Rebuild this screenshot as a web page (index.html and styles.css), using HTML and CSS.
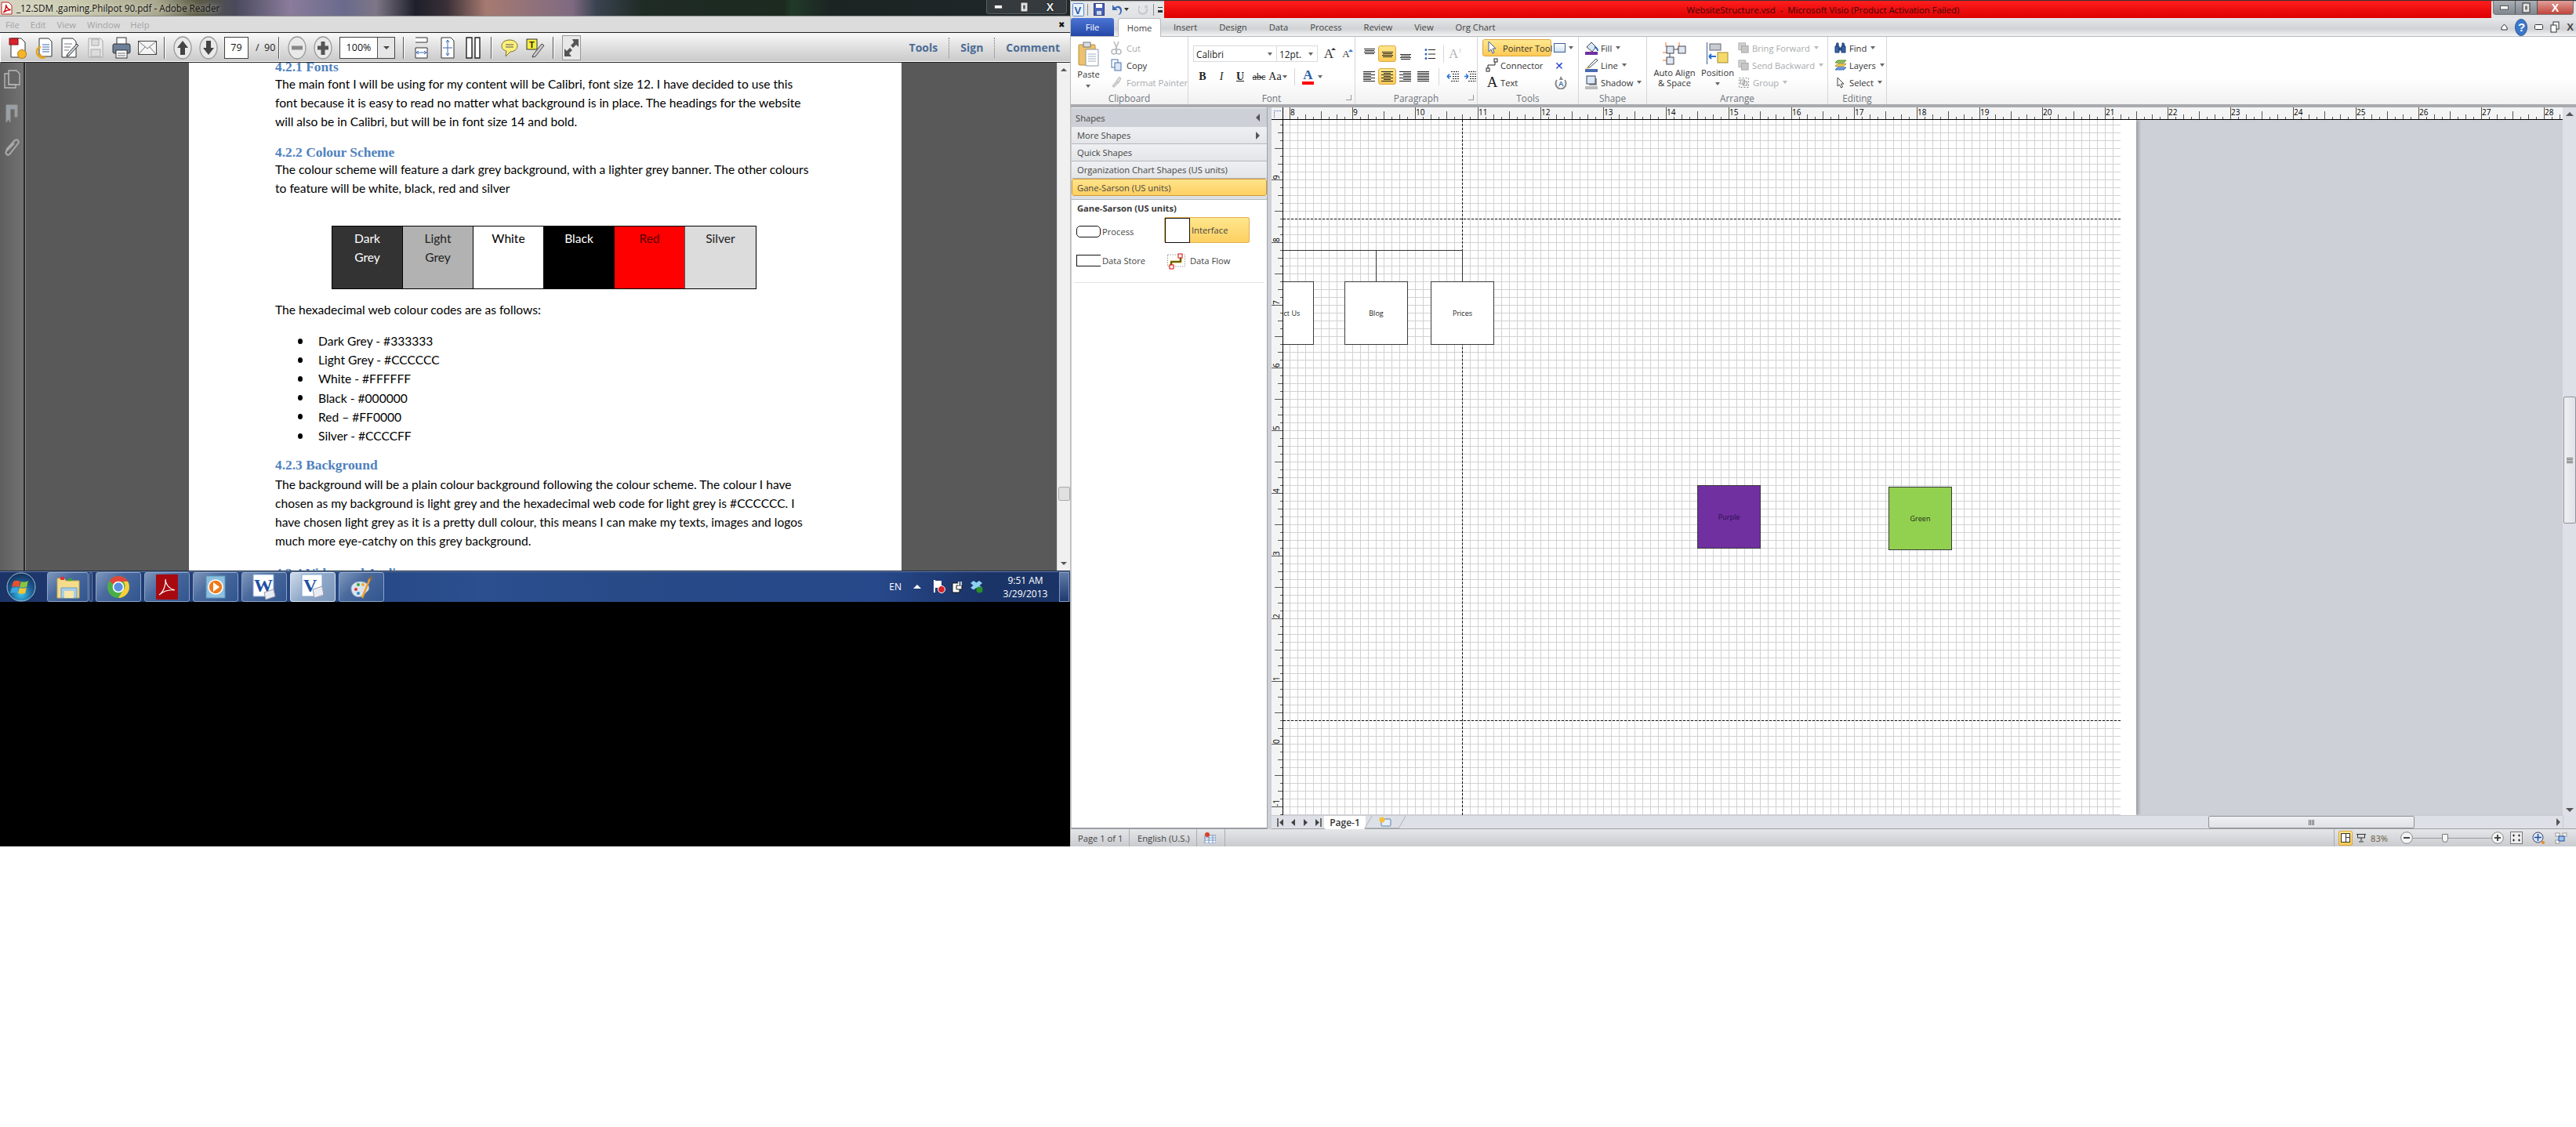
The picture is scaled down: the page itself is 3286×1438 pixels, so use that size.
FILE: index.html
```html
<!DOCTYPE html>
<html lang="en">
<head>
<meta charset="utf-8">
<title>Reader and Visio</title>
<link rel="stylesheet" href="styles.css">
</head>
<body>
<svg class="defs" width="0" height="0">
  <symbol id="al-mid" viewBox="0 0 14 14"><path d="M0 4.500h14M1 6.500h12M0 8.500h14M1 10.500h12" stroke="#222" fill="none"/></symbol>
  <symbol id="al-top" viewBox="0 0 14 14"><path d="M0 .5h14M1 2.500h12M0 4.500h14M1 6.500h12" stroke="#222" fill="none"/></symbol>
  <symbol id="al-bot" viewBox="0 0 14 14"><path d="M0 7.500h14M1 9.500h12M0 11.500h14M1 13.500h12" stroke="#222" fill="none"/></symbol>
  <symbol id="j-left" viewBox="0 0 15 15"><path d="M0 1.500h15M0 3.500h10M0 5.500h15M0 7.500h10M0 9.500h15M0 11.500h10M0 13.500h15" stroke="#222" fill="none"/></symbol>
  <symbol id="j-center" viewBox="0 0 15 15"><path d="M0 1.500h15M3 3.500h9M0 5.500h15M3 7.500h9M0 9.500h15M3 11.500h9M0 13.500h15" stroke="#222" fill="none"/></symbol>
  <symbol id="j-right" viewBox="0 0 15 15"><path d="M0 1.500h15M5 3.500h10M0 5.500h15M5 7.500h10M0 9.500h15M5 11.500h10M0 13.500h15" stroke="#222" fill="none"/></symbol>
  <symbol id="j-full" viewBox="0 0 15 15"><path d="M0 1.500h15M0 3.500h15M0 5.500h15M0 7.500h15M0 9.500h15M0 11.500h15M0 13.500h15" stroke="#222" fill="none"/></symbol>
  <symbol id="front" viewBox="0 0 16 16"><rect x="1" y="1" width="10" height="10" fill="#d3d3d3" stroke="#aaa"/><rect x="5" y="5" width="10" height="10" fill="#c6c6c6" stroke="#a5a5a5"/></symbol>
</svg>

<div class="left-screen">
  <section class="reader">
    <header class="r-title">
      <svg width="15" height="17" viewBox="0 0 15 17" class="r-appicon"><path d="M1 1h9l4 4v11H1z" fill="#fff" stroke="#b22"/><path d="M3 14c3-2 4-7 3.500-10 1 4 3 6 6 6.500-4 0-6 1-9.500 3.500z" fill="none" stroke="#c00" stroke-width="1.300"/></svg>
      <span class="r-title-text">_12.SDM .gaming.Philpot 90.pdf - Adobe Reader</span>
      <div class="glass-btns">
        <svg width="12" height="6" viewBox="0 0 12 6"><rect x=".5" y=".5" width="10" height="4.500" fill="#fff" stroke="#444"/></svg>
        <svg width="12" height="14" viewBox="0 0 12 14"><rect x="1" y="1" width="9" height="12" fill="#ddd" stroke="#333"/><rect x="3.500" y="4" width="4" height="6" fill="#666" stroke="#eee"/></svg>
        <span class="x-btn">X</span>
      </div>
    </header>
    <nav class="r-menu">
      <span class="m1">File</span><span class="m2">Edit</span><span class="m3">View</span><span class="m4">Window</span><span class="m5">Help</span>
      <span class="m-close">✖</span>
    </nav>
    <div class="r-toolbar">
      <span class="tb first"><svg width="24" height="30" viewBox="0 0 24 30"><path d="M3 3h13l5 5v19H3z" fill="#fff" stroke="#333"/><rect x="1" y="3" width="11" height="8" fill="#d9242c" stroke="#7a1014"/><circle cx="17" cy="23" r="5.500" fill="#f5b52b" stroke="#b57c10"/></svg></span>
      <span class="tb"><svg width="24" height="30" viewBox="0 0 24 30"><path d="M6 3h12l4 4v19H6z" fill="#fff" stroke="#333"/><path d="M10 11h9M10 14h9M10 17h9M10 20h9" stroke="#3a6bb5"/><path d="M8 14C2 15 0 24 9 28M9 28l-2-5M9 28l5-1" stroke="#e6a51d" stroke-width="2.500" fill="none"/></svg></span>
      <span class="tb"><svg width="24" height="30" viewBox="0 0 24 30"><path d="M2 3h14l4 4v20H2z" fill="#fff" stroke="#333"/><path d="M5 10h10M5 14h8M5 18h6" stroke="#777"/><path d="M9 23l12-13 2 2-12 13-3 1z" fill="#cdd7e2" stroke="#333"/></svg></span>
      <span class="tb"><svg width="22" height="28" viewBox="0 0 22 28"><path d="M2 2h15l3 3v21H2z" fill="#ececec" stroke="#a8a8a8"/><rect x="6" y="3" width="9" height="8" fill="#ddd" stroke="#aaa"/><rect x="5" y="16" width="12" height="9" fill="#dcdcdc" stroke="#aaa"/></svg></span>
      <span class="tb"><svg width="24" height="30" viewBox="0 0 24 30"><rect x="6" y="2" width="12" height="10" fill="#fff" stroke="#333"/><rect x="1" y="10" width="22" height="12" rx="2" fill="#6e7f98" stroke="#333"/><rect x="5" y="18" width="14" height="10" fill="#fff" stroke="#333"/><path d="M7 22h10M7 25h10" stroke="#666"/></svg></span>
      <span class="tb"><svg width="24" height="18" viewBox="0 0 24 18"><rect x=".5" y=".5" width="23" height="17" fill="#f4f4f4" stroke="#444"/><path d="M1 1l11 9 11-9M1 17l8-9M23 17l-8-9" stroke="#777" fill="none"/></svg></span>
      <i class="tsep s1"></i>
      <span class="tb t-up"><svg width="24" height="30" viewBox="0 0 24 30"><ellipse cx="12" cy="15" rx="11" ry="14" fill="#e9e9e9" stroke="#999" stroke-width="1.300"/><path d="M12 6l7 9h-4v9H9v-9H5z" fill="#444"/></svg></span>
      <span class="tb"><svg width="24" height="30" viewBox="0 0 24 30"><ellipse cx="12" cy="15" rx="11" ry="14" fill="#e9e9e9" stroke="#999" stroke-width="1.300"/><path d="M12 24l7-9h-4V6H9v9H5z" fill="#444"/></svg></span>
      <span class="pageno">79</span><span class="pagetot">/ &nbsp;90</span>
      <i class="tsep s2"></i>
      <span class="tb t-minus"><svg width="24" height="30" viewBox="0 0 24 30"><ellipse cx="12" cy="15" rx="11" ry="14" fill="#e9e9e9" stroke="#999" stroke-width="1.300"/><rect x="5" y="12.500" width="14" height="5" fill="#888"/></svg></span>
      <span class="tb"><svg width="24" height="30" viewBox="0 0 24 30"><ellipse cx="12" cy="15" rx="11" ry="14" fill="#e9e9e9" stroke="#999" stroke-width="1.300"/><path d="M5 12.500h4.500V7h5v5.500H19v5h-4.500V24h-5v-6.500H5z" fill="#555"/></svg></span>
      <span class="zoom-combo"><span class="zoom-val">100%</span><span class="zoom-arrow"></span></span>
      <i class="tsep s3"></i>
      <span class="tb t-fit"><svg width="18" height="28" viewBox="0 0 18 28"><path d="M1 1h15v6H1M1 14h15v13H1z" fill="#fff" stroke="#333"/><path d="M2 20h13M2 20l3-2M2 20l3 2M15 20l-3-2M15 20l-3 2" stroke="#3a6bb5" fill="none"/></svg></span>
      <span class="tb"><svg width="18" height="28" viewBox="0 0 18 28"><path d="M1 1h12l4 4v22H1z" fill="#fff" stroke="#333"/><path d="M9 4v20M3 14h12M9 4l-2 3M9 4l2 3M9 24l-2-3M9 24l2-3" stroke="#3a6bb5" fill="none"/></svg></span>
      <span class="tb"><svg width="20" height="28" viewBox="0 0 20 28"><path d="M1 1h7v26H1zM12 1h6v26h-6z" fill="#fff" stroke="#222" stroke-width="1.400"/></svg></span>
      <i class="tsep s4"></i>
      <span class="tb t-note"><svg width="22" height="24" viewBox="0 0 22 24"><path d="M11 2c5.500 0 10 3 10 7.500S16.500 17 12 17l-6 6 1-7C3 15 1 13 1 9.500 1 5 5.500 2 11 2z" fill="#fcf07a" stroke="#7a6f2a"/><path d="M6 8h10M6 11h10" stroke="#555"/></svg></span>
      <span class="tb"><svg width="24" height="26" viewBox="0 0 24 26"><rect x="1" y="2" width="13" height="13" fill="#f7ee3c" stroke="#333"/><text x="4" y="13" class="svg-t">T</text><path d="M9 22l11-14 3 2-11 14-4 1z" fill="#c9c9c9" stroke="#444"/></svg></span>
      <i class="tsep s5"></i>
      <span class="expand"><svg width="22" height="28" viewBox="0 0 22 28"><path d="M12 3h8v10l-3-3-4 4-3-3 4-4zM2 25V15l3 3 4-4 3 3-4 4 3 4z" fill="#555"/></svg></span>
      <span class="t-tools">Tools</span><i class="dots"></i><span class="t-sign">Sign</span><i class="dots"></i><span class="t-comment">Comment</span>
    </div>
    <div class="r-body">
      <aside class="r-nav">
        <svg width="22" height="24" viewBox="0 0 22 24"><path d="M7 1h10l4 4v14H7z" fill="#666" stroke="#bbb" stroke-width="1.300"/><path d="M2 5h5v14h9v4H2z" fill="#666" stroke="#bbb" stroke-width="1.300"/></svg>
        <svg width="18" height="24" viewBox="0 0 18 24"><path d="M2 1h14v15l-3 0V6H7v17l-2-4-3 4z" fill="#9aa0a8" stroke="#999"/></svg>
        <svg width="22" height="24" viewBox="0 0 22 24"><path d="M4 14L15 2c3-2 6 1 4 4L8 20c-2 2-6-1-4-4L14 6" fill="none" stroke="#aaa" stroke-width="2"/></svg>
      </aside>
      <div class="r-view">
        <article class="page">
          <h3 class="h-a">4.2.1 Fonts</h3>
          <p>The main font I will be using for my content will be Calibri, font size 12. I have decided to use this<br>font because it is easy to read no matter what background is in place. The headings for the website<br>will also be in Calibri, but will be in font size 14 and bold.</p>
          <h3 class="h-b">4.2.2 Colour Scheme</h3>
          <p class="p-b">The colour scheme will feature a dark grey background, with a lighter grey banner. The other colours<br>to feature will be white, black, red and silver</p>
          <div class="swatches">
            <div class="sw sw-dark">Dark<br>Grey</div>
            <div class="sw sw-light">Light<br>Grey</div>
            <div class="sw sw-white">White</div>
            <div class="sw sw-black">Black</div>
            <div class="sw sw-red">Red</div>
            <div class="sw sw-silver">Silver</div>
          </div>
          <p class="p-c">The hexadecimal web colour codes are as follows:</p>
          <ul class="codes">
            <li>Dark Grey - #333333</li>
            <li>Light Grey - #CCCCCC</li>
            <li>White - #FFFFFF</li>
            <li>Black - #000000</li>
            <li>Red – #FF0000</li>
            <li>Silver - #CCCCFF</li>
          </ul>
          <h3 class="h-c">4.2.3 Background</h3>
          <p class="p-d">The background will be a plain colour background following the colour scheme. The colour I have<br>chosen as my background is light grey and the hexadecimal web code for light grey is #CCCCCC. I<br>have chosen light grey as it is a pretty dull colour, this means I can make my texts, images and logos<br>much more eye-catchy on this grey background.</p>
          <h3 class="h-d">4.2.4 Video and Audio</h3>
        </article>
      </div>
      <div class="r-scroll">
        <i class="arr-up"></i>
        <i class="r-thumb"></i>
        <i class="arr-down"></i>
      </div>
    </div>
    <footer class="taskbar">
      <span class="orb"><svg width="38" height="38" viewBox="0 0 38 38"><defs><radialGradient id="orbg" cx=".5" cy=".75" r=".7"><stop offset="0" stop-color="#39c6ee"/><stop offset=".55" stop-color="#1f5f95"/><stop offset="1" stop-color="#16345e"/></radialGradient></defs><circle cx="19" cy="19" r="18" fill="url(#orbg)" stroke="#9fc3d8"/><path d="M9 12c3-2 6-1 9 0l-2 7c-3-1-6-1-9 0z" fill="#e8512f"/><path d="M19 12c3 1 6 1 9-1l-2 8c-3 1-6 1-9 0z" fill="#8cc63e"/><path d="M7 20c3-1 6-1 9 0l-2 7c-3-1-6-1-9 0z" fill="#3aa6e0"/><path d="M17 20c3 1 6 1 9 0l-2 7c-3 1-6 1-9 0z" fill="#f7c531"/></svg></span>
      <span class="tbtn t-explorer"><svg width="34" height="34" viewBox="0 0 34 34"><path d="M3 6h9l2 3h17v22H3z" fill="#f5dc8a" stroke="#c7a850"/><rect x="7" y="4" width="5" height="4" fill="#d33"/><rect x="17" y="6" width="5" height="3" fill="#3a3"/><path d="M8 18h20v13H8z" fill="#a9cde6" stroke="#6d9dc4"/><path d="M12 22h12v9H12z" fill="#f8e7a8"/></svg></span><i class="tb-grip"></i>
      <span class="tbtn t-chrome"><svg width="30" height="30" viewBox="0 0 30 30"><circle cx="15" cy="15" r="14" fill="#4aae48"/><path d="M15 1a14 14 0 0 1 12.100 7H15a7 7 0 0 0-6.300 4L3.500 7A14 14 0 0 1 15 1z" fill="#e2463a"/><path d="M27.100 8A14 14 0 0 1 15 29l6-10a7 7 0 0 0 0-11z" fill="#f9cf3a"/><circle cx="15" cy="15" r="6.500" fill="#5a8fe0" stroke="#fff" stroke-width="1.600"/></svg></span>
      <span class="tbtn"><svg width="30" height="34" viewBox="0 0 30 34"><rect x="1" y="1" width="28" height="32" rx="1" fill="#a8090f"/><path d="M5 27c6-4 9-14 8-20 0 6 4 12 12 14-7-1-14 1-20 6z" fill="none" stroke="#fff" stroke-width="1.200"/></svg></span>
      <span class="tbtn"><svg width="26" height="30" viewBox="0 0 26 30"><rect x="1" y="1" width="24" height="28" fill="#8dc0df" stroke="#5b93b8"/><circle cx="13" cy="15" r="9" fill="#ee7a1b" stroke="#fff" stroke-width="1.500"/><path d="M10 9l8 6-8 6z" fill="#fff"/></svg></span>
      <span class="tbtn"><svg width="30" height="34" viewBox="0 0 30 34"><path d="M1 1h26v28H1z" fill="#fff" stroke="#7fa3d1"/><text x="2" y="23" class="svg-word">W</text><path d="M15 24l12-4 2 9-12 4z" fill="#e8ecf3" stroke="#99a"/></svg></span>
      <span class="tbtn active"><svg width="30" height="34" viewBox="0 0 30 34"><path d="M1 1h26v28H1z" fill="#fff" stroke="#7fa3d1"/><text x="3" y="23" class="svg-word">V</text><path d="M15 20l12-4 2 11-12 4z" fill="#e8ecf3" stroke="#99a"/></svg></span>
      <span class="tbtn"><svg width="32" height="34" viewBox="0 0 32 34"><path d="M3 20C2 12 12 8 20 11c7 3 7 9 3 12-3 2-3 5-7 6C10 31 4 28 3 20z" fill="#d9e4ef" stroke="#8ea7c2"/><circle cx="9" cy="20" r="2" fill="#d33"/><circle cx="12" cy="14" r="2" fill="#3a3"/><circle cx="18" cy="14" r="2" fill="#ea3"/><circle cx="12" cy="25" r="2" fill="#38c"/><path d="M17 31L27 6" stroke="#f09a22" stroke-width="2.500"/><path d="M26 7l3-6 1 7z" fill="#8a6a3a"/></svg></span>
      <div class="tray">
        <span class="lang">EN</span>
        <i class="tray-up"></i>
        <svg width="16" height="18" viewBox="0 0 16 18"><path d="M2 0v16" stroke="#fff" stroke-width="2"/><path d="M3 1h8v9H3z" fill="#fff"/><circle cx="11" cy="12" r="4.500" fill="#d8232a" stroke="#fff"/></svg>
        <svg width="15" height="16" viewBox="0 0 15 16"><path d="M1 3h9v12H1z" fill="#fff" stroke="#111"/><path d="M6 6h7v5H6z" fill="#fff" stroke="#111"/><path d="M9 1v5M12 1v5" stroke="#fff" stroke-width="1.500"/></svg>
        <svg width="17" height="17" viewBox="0 0 17 17"><path d="M1 4l4-3 3.500 2.500L12 1l4 3-3.500 3 3.500 3-4 2.500-3.500-2.500L5 12.500 1 10l3.500-3z" fill="#8ed0f2"/><circle cx="12.500" cy="12.500" r="4" fill="#2a8f2a"/></svg>
        <span class="clock">9:51 AM<br>3/29/2013</span>
        <i class="showdesk"></i>
      </div>
    </footer>
  </section>
  <div class="black"></div>
</div>

<section class="visio">
  <header class="v-title">
    <div class="qat">
      <svg width="15" height="17" viewBox="0 0 15 17"><rect x=".5" y=".5" width="14" height="16" rx="1" fill="#eaf1fb" stroke="#5c86c4"/><text x="2.500" y="13.500" class="svg-v">V</text></svg>
      <i class="q-sep"></i>
      <svg width="14" height="16" viewBox="0 0 14 16"><rect x=".5" y=".5" width="13" height="15" fill="#4c62b8" stroke="#27367a"/><rect x="3" y="1" width="8" height="5" fill="#fff"/><rect x="4" y="10" width="6" height="5" fill="#cfd6e6"/></svg>
      <svg class="q-undo" width="13" height="15" viewBox="0 0 13 15"><path d="M1 1v7h7L5.500 6C8 3.500 11 6 11 9c0 2-1 4-3 5 4 0 5-3 5-6 0-5-5-7-9-3.500z" fill="#4169b5"/></svg>
      <i class="q-caret"></i>
      <svg class="q-redo" width="13" height="15" viewBox="0 0 13 15"><path d="M2 3a5.500 5.500 0 1 0 9 3" fill="none" stroke="#c4c8cd" stroke-width="2"/><path d="M9 1l4 3-5 2z" fill="#c4c8cd"/></svg>
      <i class="q-sep q-sep2"></i>
      <i class="q-more"></i>
    </div>
    <div class="red-bar"><span>WebsiteStructure.vsd &nbsp;-&nbsp; Microsoft Visio (Product Activation Failed)</span></div>
    <div class="v-winbtns">
      <span class="wb"><svg width="12" height="6" viewBox="0 0 12 6"><rect x=".5" y=".5" width="10" height="4.500" fill="#fff" stroke="#555"/></svg></span>
      <span class="wb"><svg width="12" height="14" viewBox="0 0 12 14"><rect x="1" y="1" width="9" height="12" fill="#ddd" stroke="#333"/><rect x="3.500" y="4" width="4" height="6" fill="#777" stroke="#eee"/></svg></span>
      <span class="wb wb-close">X</span>
    </div>
  </header>
  <nav class="v-tabs">
    <span class="file-tab">File</span>
    <span class="home-tab">Home</span>
    <span class="vt vt1">Insert</span><span class="vt vt2">Design</span><span class="vt vt3">Data</span><span class="vt vt4">Process</span><span class="vt vt5">Review</span><span class="vt vt6">View</span><span class="vt vt7">Org Chart</span>
    <div class="tab-ctl">
      <svg width="9" height="9" viewBox="0 0 9 9"><path d="M4.500 1L8 5v3H1V5z" fill="#fff" stroke="#333"/></svg>
      <svg width="16" height="22" viewBox="0 0 16 22"><ellipse cx="8" cy="11" rx="7.500" ry="10.500" fill="#3c77c9" stroke="#2c5aa0"/><text x="4" y="16" class="svg-help">?</text></svg>
      <svg width="11" height="7" viewBox="0 0 11 7"><rect x=".5" y=".5" width="10" height="6" rx="1" fill="#fff" stroke="#333"/></svg>
      <svg width="12" height="15" viewBox="0 0 12 15"><rect x="4" y="1" width="7" height="9" fill="#fff" stroke="#333"/><rect x="1" y="5" width="7" height="9" fill="#fff" stroke="#333"/></svg>
      <span class="tab-x">X</span>
    </div>
  </nav>
  <div class="ribbon">
    <div class="rg g-clip">
      <div class="rg-body">
        <div class="paste">
          <svg width="27" height="32" viewBox="0 0 27 32"><rect x="1" y="4" width="21" height="26" rx="1" fill="#eec26d" stroke="#b98d3c"/><rect x="7" y="1" width="9" height="6" fill="#d9dee6" stroke="#777"/><path d="M10 10h16v21H10z" fill="#fff" stroke="#8a97a8"/><path d="M13 16h10M13 19h10M13 22h10M13 25h10" stroke="#9fb0c4"/></svg>
          <span class="big-label">Paste</span><i class="dn"></i>
        </div>
        <div class="rows">
          <div class="row dis"><svg width="14" height="18" viewBox="0 0 14 18"><path d="M4 1l4 10M10 1L6 11" stroke="#b5b9bd" stroke-width="1.500"/><circle cx="4" cy="14" r="3" fill="none" stroke="#b5b9bd" stroke-width="1.500"/><circle cx="10" cy="14" r="3" fill="none" stroke="#b5b9bd" stroke-width="1.500"/></svg><span>Cut</span></div>
          <div class="row"><svg width="14" height="16" viewBox="0 0 14 16"><rect x="1" y="1" width="8" height="10" fill="#fff" stroke="#4a72ad"/><rect x="5" y="5" width="8" height="10" fill="#dbe7f6" stroke="#4a72ad"/></svg><span>Copy</span></div>
          <div class="row dis"><svg width="14" height="16" viewBox="0 0 14 16"><path d="M1 13l6-7 3 3-6 6z" fill="#c9cbcd"/><path d="M7 6l4-5 2 2-3 6z" fill="#ddd" stroke="#b8b8b8"/></svg><span>Format Painter</span></div>
        </div>
      </div>
      <div class="rg-label">Clipboard</div>
    </div>
    <div class="rg g-font">
      <div class="rg-body col">
        <div class="f-row1">
          <span class="combo c-font">Calibri<i class="dn"></i></span><span class="combo c-size">12pt.<i class="dn"></i></span>
          <span class="grow-a">A<i class="up"></i></span><span class="shrink-a">A<i class="up up-blue"></i></span>
        </div>
        <div class="f-row2">
          <b class="fb">B</b><i class="fb fi">I</i><b class="fb fu">U</b><span class="fb fs">abc</span><span class="fb fa">Aa<i class="dn"></i></span><i class="vsep"></i>
          <span class="color-a">A<i class="redbar"></i></span><i class="dn"></i>
        </div>
      </div>
      <div class="rg-label">Font<i class="launch"></i></div>
    </div>
    <div class="rg g-para">
      <div class="rg-body col">
        <div class="p-row p-row1">
          <span class="pb"><svg width="14" height="14"><use href="#al-top"/></svg></span>
          <span class="pb on"><svg width="14" height="14"><use href="#al-mid"/></svg></span>
          <span class="pb"><svg width="14" height="14"><use href="#al-bot"/></svg></span>
          <span class="pb bul"><svg width="14" height="16" viewBox="0 0 14 16"><path d="M5 2.500h9M5 8h9M5 13.500h9" stroke="#222"/><circle cx="2" cy="2.500" r="1.500" fill="#3a6bb5"/><circle cx="2" cy="8" r="1.500" fill="#3a6bb5"/><circle cx="2" cy="13.500" r="1.500" fill="#3a6bb5"/></svg></span>
          <i class="vsep"></i>
          <span class="ab-dis">A<sup>↕</sup></span>
        </div>
        <div class="p-row p-row2">
          <span class="pb"><svg width="15" height="15"><use href="#j-left"/></svg></span>
          <span class="pb on"><svg width="15" height="15"><use href="#j-center"/></svg></span>
          <span class="pb"><svg width="15" height="15"><use href="#j-right"/></svg></span>
          <span class="pb"><svg width="15" height="15"><use href="#j-full"/></svg></span>
          <i class="vsep"></i>
          <span class="pb ind"><svg width="16" height="15" viewBox="0 0 16 15"><path d="M6 1.500h10M8 4.500h8M8 7.500h8M8 10.500h8M6 13.500h10" stroke="#222" stroke-dasharray="2 1"/><path d="M6 7.500H1M1 7.500l3-3M1 7.500l3 3" stroke="#2a6fd0" stroke-width="1.500" fill="none"/></svg></span>
          <span class="pb ind"><svg width="16" height="15" viewBox="0 0 16 15"><path d="M6 1.500h10M8 4.500h8M8 7.500h8M8 10.500h8M6 13.500h10" stroke="#222" stroke-dasharray="2 1"/><path d="M1 7.500h5M6 7.500l-3-3M6 7.500l-3 3" stroke="#2a6fd0" stroke-width="1.500" fill="none"/></svg></span>
        </div>
      </div>
      <div class="rg-label">Paragraph<i class="launch"></i></div>
    </div>
    <div class="rg g-tools">
      <div class="rg-body">
        <div class="rows">
          <div class="row pointer"><svg width="12" height="18" viewBox="0 0 12 18"><path d="M2 1v13l3-3 2 5 2-1-2-5h4z" fill="#fff" stroke="#3c5f95"/></svg><span>Pointer Tool</span></div>
          <div class="row tool"><svg width="16" height="18" viewBox="0 0 16 18"><path d="M3 15V9h9V3" fill="none" stroke="#222"/><rect x="11" y="1" width="4" height="4" fill="#fff" stroke="#222"/><rect x="1" y="13" width="4" height="4" fill="#fff" stroke="#222"/></svg><span>Connector</span></div>
          <div class="row tool"><span class="big-a">A</span><span>Text</span></div>
        </div>
        <div class="tool-side">
          <div class="side"><i class="swatch"></i><i class="dn"></i></div>
          <div class="side x-blue">✕</div>
          <div class="side"><svg width="16" height="18" viewBox="0 0 16 18"><path d="M3 6a6.500 7 0 1 0 10 0" fill="none" stroke="#888" stroke-width="2"/><path d="M8 1l-2 5 5 0z" fill="#888"/><text x="5" y="14" class="svg-a">A</text></svg></div>
        </div>
      </div>
      <div class="rg-label">Tools</div>
    </div>
    <div class="rg g-shape">
      <div class="rg-body">
        <div class="rows">
          <div class="row"><svg width="17" height="18" viewBox="0 0 17 18"><path d="M2 8l6-6 6 6-5 6z" fill="#dbe7f6" stroke="#345"/><path d="M12 8c3 1 4 3 4 5" stroke="#2b6cb8" stroke-width="2" fill="none"/><rect y="14" width="16" height="4" fill="#7030a0"/></svg><span>Fill</span><i class="dn"></i></div>
          <div class="row"><svg width="17" height="18" viewBox="0 0 17 18"><path d="M3 12L14 1l2 2-10 9z" fill="#fff" stroke="#345"/><path d="M3 11l2 2-4 1z" fill="#f0b030"/><rect y="14" width="16" height="4" fill="#4a6ab0"/></svg><span>Line</span><i class="dn"></i></div>
          <div class="row"><svg width="17" height="18" viewBox="0 0 17 18"><rect x="5" y="4" width="10" height="9" fill="#999"/><rect x="2" y="1" width="11" height="10" fill="#dbe7f6" stroke="#345"/><rect y="14" width="16" height="4" fill="#bbb"/></svg><span>Shadow</span><i class="dn"></i></div>
        </div>
      </div>
      <div class="rg-label">Shape</div>
    </div>
    <div class="rg g-arr">
      <div class="rg-body">
        <div class="bigbtn b-auto">
          <svg width="32" height="30" viewBox="0 0 32 30"><path d="M5 1v6M22 1v6M1 14h6M1 24h6M19 9h4" stroke="#e8742a"/><rect x="6" y="6" width="9" height="9" fill="#dfe7f2" stroke="#445"/><rect x="21" y="6" width="9" height="9" fill="#dfe7f2" stroke="#445"/><rect x="6" y="20" width="9" height="9" fill="#dfe7f2" stroke="#445"/><path d="M15 10h6M10 15v5" stroke="#445"/></svg>
          <span class="big-label">Auto Align<br>&amp; Space</span>
        </div>
        <div class="bigbtn b-pos">
          <svg width="28" height="30" viewBox="0 0 28 30"><path d="M.5 1v28" stroke="#3a5f95"/><rect x="4" y="3" width="14" height="8" fill="#c9ccd1" stroke="#667"/><rect x="14" y="14" width="13" height="13" fill="#f4d96b" stroke="#a58a2c"/><path d="M12 19H3M3 19l3-3M3 19l3 3" stroke="#2a6fd0" stroke-width="2" fill="none"/></svg>
          <span class="big-label">Position</span><i class="dn"></i>
        </div>
        <div class="rows dis-rows">
          <div class="row dis"><svg width="14" height="14"><use href="#front"/></svg><span>Bring Forward</span><i class="dn"></i></div>
          <div class="row dis"><svg width="14" height="14"><use href="#front"/></svg><span>Send Backward</span><i class="dn"></i></div>
          <div class="row dis"><svg width="15" height="15" viewBox="0 0 15 15"><rect x="1.500" y="1.500" width="12" height="12" fill="none" stroke="#888" stroke-dasharray="2 2"/><rect x="3.500" y="4" width="5" height="5" fill="none" stroke="#999"/><rect x="6.500" y="6" width="5" height="5" fill="none" stroke="#999"/></svg><span>Group</span><i class="dn"></i></div>
        </div>
      </div>
      <div class="rg-label">Arrange</div>
    </div>
    <div class="rg g-edit">
      <div class="rg-body">
        <div class="rows">
          <div class="row"><svg width="15" height="14" viewBox="0 0 15 14"><path d="M1 5h5v8H1zM9 5h5v8H9zM6 7h3v3H6zM2 5l1-4h2v4M13 5l-1-4h-2v4" fill="#3a62a8" stroke="#1e3a70"/></svg><span>Find</span><i class="dn"></i></div>
          <div class="row"><svg width="15" height="14" viewBox="0 0 15 14"><path d="M4 1h11l-3 3H1z" fill="#8fc85a" stroke="#5a8a30"/><path d="M4 5.500h11l-3 3H1z" fill="#f3cf5a" stroke="#b09030"/><path d="M4 10h11l-3 3H1z" fill="#6d9de0" stroke="#3a6bb5"/></svg><span>Layers</span><i class="dn"></i></div>
          <div class="row"><svg width="15" height="15" viewBox="0 0 15 15"><path d="M4 1v11l2.500-2 2 4 2-1-2-4h3.500z" fill="#fff" stroke="#444"/></svg><span>Select</span><i class="dn"></i></div>
        </div>
      </div>
      <div class="rg-label">Editing</div>
    </div>
  </div>
  <div class="v-main">
    <aside class="shapes">
      <div class="sh-head">Shapes<i class="tri-l"></i></div>
      <div class="sh-row">More Shapes<i class="tri-r"></i></div>
      <div class="sh-row">Quick Shapes</div>
      <div class="sh-row">Organization Chart Shapes (US units)</div>
      <div class="sh-row sel">Gane-Sarson (US units)</div>
      <div class="sh-bar"></div>
      <div class="sh-title">Gane-Sarson (US units)</div>
      <div class="sh-grid">
        <div class="sh-item"><i class="m-process"></i>Process</div>
        <div class="sh-item hot"><i class="m-iface"></i>Interface</div>
        <div class="sh-item"><i class="m-store"></i>Data Store</div>
        <div class="sh-item flow"><svg width="26" height="26" viewBox="0 0 26 26"><rect x="1.500" y="5" width="22" height="15" fill="none" stroke="#999" stroke-dasharray="1.500 1.500"/><path d="M6 21v-7h12V6" fill="none" stroke="#c8b020" stroke-width="3"/><path d="M6 21v-7h12V6" fill="none" stroke="#111"/><rect x="15" y="4" width="5" height="5" fill="#fff" stroke="#d00"/><rect x="4" y="18" width="5" height="5" fill="#fff" stroke="#d00"/></svg>Data Flow</div>
      </div>
      <div class="sh-rule"></div>
    </aside>
    <div class="splitter"></div>
    <div class="work">
      <div class="r-corner"><i></i></div>
      <div class="h-ruler"><span>8</span><span>9</span><span>10</span><span>11</span><span>12</span><span>13</span><span>14</span><span>15</span><span>16</span><span>17</span><span>18</span><span>19</span><span>20</span><span>21</span><span>22</span><span>23</span><span>24</span><span>25</span><span>26</span><span>27</span><span>28</span></div>
      <div class="v-scroll"><i class="vs-up"></i><i class="vs-thumb"></i><i class="vs-down"></i></div>
      <div class="v-ruler"><span>9</span><span>8</span><span>7</span><span>6</span><span>5</span><span>4</span><span>3</span><span>2</span><span>1</span><span>0</span><span>-1</span></div>
      <div class="canvas">
        <div class="sheet">
          <div class="grid">
            <i class="dash-h d1"></i><i class="dash-h d2"></i><i class="dash-v"></i>
            <i class="ln l-h"></i><i class="ln l-v1"></i><i class="ln l-v2"></i>
            <div class="node n-contact">Contact Us</div>
            <div class="node n-blog">Blog</div>
            <div class="node n-prices">Prices</div>
            <div class="node n-purple">Purple</div>
            <div class="node n-green">Green</div>
          </div>
        </div>
      </div>
      <div class="tabs-row">
        <span class="nav-ic"><svg width="9" height="11" viewBox="0 0 9 11"><path d="M1 0v11" stroke="#444" stroke-width="1.500"/><path d="M8 1L3 5.500 8 10z" fill="#444"/></svg></span>
        <span class="nav-ic"><svg width="7" height="11" viewBox="0 0 7 11"><path d="M6 1L1 5.500 6 10z" fill="#444"/></svg></span>
        <span class="nav-ic"><svg width="7" height="11" viewBox="0 0 7 11"><path d="M1 1l5 4.500L1 10z" fill="#444"/></svg></span>
        <span class="nav-ic"><svg width="9" height="11" viewBox="0 0 9 11"><path d="M8 0v11" stroke="#444" stroke-width="1.500"/><path d="M1 1l5 4.500L1 10z" fill="#444"/></svg></span>
        <span class="page-tab">Page-1</span>
        <span class="new-tab"><svg width="18" height="14" viewBox="0 0 18 14"><rect x="4" y="3" width="12" height="9" rx="1" fill="#e5eef9" stroke="#5c7fae"/><circle cx="5" cy="4" r="3.500" fill="#f3c13c"/></svg></span>
        <div class="h-scroll"><i class="hs-thumb"><b></b></i><i class="hs-right"></i></div>
      </div>
      <div class="w-corner"></div>
    </div>
  </div>
  <footer class="v-status">
    <span class="st st-page">Page 1 of 1</span>
    <span class="st st-lang">English (U.S.)</span>
    <span class="st st-ic"><svg width="15" height="14" viewBox="0 0 15 14"><rect x="1" y="4" width="14" height="10" fill="#fff" stroke="#6d8fbf"/><path d="M1 7h14M1 10h14M6 4v10M11 4v10" stroke="#6d8fbf"/><circle cx="4" cy="3" r="3" fill="#d9402a"/></svg></span>
    <span class="st-fill"></span>
    <i class="st-sep"></i>
    <span class="view-on"><svg width="12" height="12" viewBox="0 0 12 12"><rect x=".5" y=".5" width="11" height="11" fill="#fff" stroke="#333"/><path d="M6.500 1v10M6.500 5.500H11" stroke="#333"/></svg></span>
    <span class="view-pres"><svg width="12" height="12" viewBox="0 0 12 12"><path d="M0 1.500h12M1.500 2v4h9V2M6 6v4M3 11h6" stroke="#333" fill="none"/></svg></span>
    <span class="zoom-pct">83%</span>
    <span class="zc"><svg width="16" height="16" viewBox="0 0 16 16"><circle cx="8" cy="8" r="7.300" fill="#f5f5f5" stroke="#888"/><rect x="4" y="7" width="8" height="2" fill="#444"/></svg></span>
    <span class="slider"><i class="knob"></i></span>
    <span class="zc"><svg width="16" height="16" viewBox="0 0 16 16"><circle cx="8" cy="8" r="7.300" fill="#f5f5f5" stroke="#888"/><path d="M4 7h3V4h2v3h3v2H9v3H7V9H4z" fill="#444"/></svg></span>
    <span class="st-r"><svg width="16" height="16" viewBox="0 0 16 16"><rect x=".5" y=".5" width="15" height="15" fill="#eee" stroke="#777"/><path d="M3 5h3M4.500 3.500v3M10 5h3M11.500 3.500v3M3 11h3M4.500 9.500v3M10 11h3M11.500 9.500v3" stroke="#222"/></svg></span>
    <span class="st-r sr2"><svg width="17" height="17" viewBox="0 0 17 17"><circle cx="7.500" cy="7.500" r="6.500" fill="#dbe7f6" stroke="#446"/><path d="M7.500 3v9M3 7.500h9" stroke="#1c4f9c" stroke-width="1.500"/><circle cx="14" cy="14" r="2" fill="#e98a1f"/></svg></span>
    <span class="st-r sr3"><svg width="16" height="15" viewBox="0 0 16 15"><rect x="1" y="1" width="5" height="4" fill="#fff" stroke="#999"/><rect x="10" y="1" width="5" height="4" fill="#fff" stroke="#999"/><rect x="1" y="10" width="5" height="4" fill="#fff" stroke="#999"/><rect x="5" y="5" width="7" height="6" fill="#9cc5f0" stroke="#1c4f9c"/></svg></span>
  </footer>
</section>
</body>
</html>
```
FILE: styles.css
```css
* { box-sizing: border-box; }
html, body { margin: 0; padding: 0; }
body { width: 3286px; height: 1438px; background: #fff; display: flex; align-items: flex-start; overflow: hidden; font-family: "Open Sans", "Liberation Sans", sans-serif; }
i { font-style: normal; display: block; }
svg { display: block; flex: none; }
.defs { position: absolute; }
.svg-t { font: bold 11px "Liberation Sans", sans-serif; fill: #222; }
.svg-word { font: bold 24px "Liberation Serif", serif; fill: #1d4fa3; }
.svg-v { font: bold 13px "Liberation Sans", sans-serif; fill: #2a5cab; }
.svg-help { font: bold 15px "Liberation Sans", sans-serif; fill: #fff; }
.svg-a { font: bold 9px "Liberation Sans", sans-serif; fill: #3a6bb5; }

/* Left screen */
.left-screen { width: 1366px; flex: none; border-right: 1px solid #bbb; }
.reader { height: 768px; display: flex; flex-direction: column; }
.black { height: 312px; background: #000; }

.r-title { height: 21px; display: flex; align-items: center; border-bottom: 1px solid #8c8c8c; background: linear-gradient(90deg, #d7d5c4 0, #ccccb0 90px, #a9a88e 200px, #5c5b44 250px, #49495c 300px, #8a7c9b 370px, #6a6a8c 440px, #7c7686 480px, #1e1f2a 530px, #3a3038 570px, #a67a70 620px, #7f6a82 730px, #3a4350 760px, #1f2b25 820px, #1c2a20 1000px, #213a28 1010px, #1b2422 1060px, #20272a 1366px); }
.r-appicon { margin-left: 1px; }
.r-title-text { margin-left: 5px; font-size: 11.700px; color: #111; white-space: nowrap; text-shadow: 0 0 6px rgba(255,255,255,.8); }
.glass-btns { margin-left: auto; width: 103px; height: 18px; margin-right: 4px; align-self: flex-start; display: flex; align-items: center; justify-content: space-between; padding: 0 16px 0 9px; border: 1px solid #5a5f63; border-top: 0; border-radius: 0 0 4px 4px; background: rgba(60,66,70,.75); }
.x-btn { font: bold 14px "Liberation Sans", sans-serif; color: #eee; text-shadow: 0 0 2px #000; }

.r-menu { height: 21px; background: #dcdcdc; display: flex; align-items: center; position: relative; font-size: 11.200px; color: #a3a3a3; border-bottom: 1px solid #222; }
.m1 { margin-left: 7px; } .m2 { margin-left: 14px; } .m3 { margin-left: 14px; } .m4 { margin-left: 14px; } .m5 { margin-left: 13px; }
.m-close { margin-left: auto; margin-right: 7px; color: #111; font-size: 10px; }

.r-toolbar { height: 38px; display: flex; align-items: center; background: linear-gradient(#fafafa, #e9e9e9 30%, #c9c9c9); border-left: 1px solid #fff; border-bottom: 1px solid #222; box-shadow: inset 0 -1px 0 #fff; }
.tb { width: 33px; flex: none; display: flex; justify-content: center; align-items: center; }
.first { margin-left: 5px; }
.tsep { width: 1px; height: 28px; background: #555; box-shadow: 1px 0 0 #fff; flex: none; }
.s1 { margin-left: 5px; } .t-up { margin-left: 6px; }
.pageno { margin-left: 4px; width: 31px; height: 28px; background: #fff; border: 1px solid #444; display: flex; align-items: center; justify-content: center; font-size: 12.500px; color: #111; flex: none; }
.pagetot { margin-left: 9px; width: 24px; font-size: 12.500px; color: #222; white-space: nowrap; flex: none; }
.s2 { margin-left: 5px; } .t-minus { margin-left: 6px; }
.zoom-combo { margin-left: 5px; width: 71px; height: 28px; display: flex; border: 1px solid #444; flex: none; }
.zoom-val { width: 48px; background: #fff; border-right: 1px solid #555; font-size: 12.500px; color: #111; display: flex; align-items: center; justify-content: center; }
.zoom-arrow { flex: 1; background: #e6e6e6; position: relative; }
.zoom-arrow::after { content: ""; position: absolute; left: 7px; top: 11px; border: 4px solid transparent; border-top: 4px solid #444; }
.s3 { margin-left: 10px; } .t-fit { margin-left: 6px; }
.s4 { margin-left: 6px; } .t-note { margin-left: 6px; }
.s5 { margin-left: 6px; }
.expand { margin-left: 11px; width: 24px; height: 32px; background: #e8e8e8; border: 1px solid #999; display: flex; align-items: center; justify-content: center; flex: none; }
.t-tools { margin-left: auto; font-size: 14px; font-weight: 700; color: #4c6c95; }
.t-sign, .t-comment { font-size: 14px; font-weight: 700; color: #4c6c95; }
.dots { width: 0; height: 26px; border-left: 1px dotted #777; margin: 0 14px; }
.t-comment { margin-right: 13px; }

.r-body { height: 648px; display: flex; background: #595959; overflow: hidden; }
.r-nav { width: 32px; flex: none; background: linear-gradient(90deg, #5f5f5f, #727272); border-right: 2px solid #2a2a2a; box-shadow: 1px 0 0 #888; display: flex; flex-direction: column; align-items: center; gap: 20px; padding-top: 9px; }
.r-view { flex: 1; padding-left: 209px; overflow: hidden; }
.page { width: 909px; height: 653px; background: #fff; padding-left: 110px; margin-top: -5px; font-family: Lato, "Open Sans", sans-serif; color: #000; white-space: nowrap; overflow: hidden; }
.page h3 { margin: 0; font: bold 17.400px/20px "Liberation Serif", serif; color: #4f81bd; }
.page p { margin: 0; font-size: 15.600px; line-height: 24px; }
.page .h-b { margin-top: 17px; }
.swatches { margin: 36px 0 0 72px; width: 542px; height: 81px; display: grid; grid-template-columns: repeat(6, 1fr); border: 1px solid #000; }
.sw { font-size: 15.600px; line-height: 24px; text-align: center; padding-top: 3px; border-right: 1px solid #000; }
.sw-dark { background: #333; color: #fff; }
.sw-light { background: #b2b2b2; color: #222; }
.sw-white { background: #fff; }
.sw-black { background: #000; color: #fff; }
.sw-red { background: #f00; color: #500; border-right: 1px solid #555; }
.sw-silver { background: #dcdcdc; color: #222; border-right: 0; }
.page .p-c { margin-top: 14px; }
.codes { margin: 16px 0 0; padding: 0 0 0 29px; font-size: 15.600px; line-height: 24.200px; list-style: none; }
.codes li { display: flex; align-items: center; }
.codes li::before { content: ""; width: 6px; height: 7px; border-radius: 50%; background: #000; margin-right: 20px; flex: none; }
.page .h-c { margin-top: 15px; }
.page .p-d { margin-top: 3px; }
.page .h-d { margin-top: 19px; }

.r-scroll { width: 17px; flex: none; background: #f0f0f0; border-left: 1px solid #ddd; display: flex; flex-direction: column; align-items: center; padding: 7px 0; }
.arr-up { border: 4px solid transparent; border-bottom: 4px solid #555; border-top: 0; }
.r-thumb { margin-top: 530px; width: 15px; height: 18px; background: #e0e0e0; border: 1px solid #aaa; border-radius: 2px; }
.arr-down { margin-top: auto; border: 4px solid transparent; border-top: 4px solid #555; border-bottom: 0; }

.taskbar { height: 40px; display: flex; align-items: center; border-top: 1px solid #1d2a3e; background: linear-gradient(90deg, #1c3468 0, #2b4f8f 45%, #284a87 800px, #27488a 1120px, #1b3468 1250px, #1b3468 100%); box-shadow: inset 0 1px 0 #5f7ba8; }
.orb { margin-left: 8px; width: 38px; flex: none; }
.tbtn { height: 38px; width: 58px; margin-left: 4px; flex: none; display: flex; align-items: center; justify-content: center; border: 1px solid #8ca4c8; border-radius: 3px; background: linear-gradient(135deg, #7f97bc 0, #4a6a9e 40%, #31558f 100%); }
.t-explorer { margin-left: 14px; width: 53px; }
.t-chrome { margin-left: 4px; }
.tb-grip { width: 4px; height: 38px; margin-left: 1px; border: 1px solid #6a85ad; border-radius: 2px; flex: none; }
.tbtn.active { background: linear-gradient(135deg, #cfdbe9 0, #8fa8c9 50%, #7a95bb 100%); border-color: #dce6f2; }
.tray { margin-left: auto; display: flex; align-items: center; color: #fff; font-size: 12px; height: 100%; }
.lang { margin-right: 15px; }
.tray-up { border: 5px solid transparent; border-bottom: 5px solid #fff; border-top: 0; margin-right: 15px; }
.tray svg { margin-right: 8px; }
.clock { width: 76px; margin-left: 8px; text-align: center; line-height: 17px; font-size: 12px; white-space: nowrap; }
.showdesk { width: 13px; height: 38px; margin: 0 1px 0 5px; border: 1px solid #8098bd; background: linear-gradient(#5f7ba6, #1f3a70); }

/* Visio */
.visio { width: 1920px; height: 1080px; flex: none; display: flex; flex-direction: column; background: #fff; }
.v-title { height: 23px; display: flex; background: linear-gradient(#b0b4b8 0, #e6e8ea 2px, #dfe1e4); border-top: 1px solid #333; }
.qat { width: 119px; display: flex; align-items: center; flex: none; padding-left: 2px; }
.q-sep { width: 1px; height: 15px; background: #888; margin: 0 7px 0 4px; }
.q-undo { margin-left: 9px; }
.q-caret { margin-left: 3px; border: 3px solid transparent; border-top: 4px solid #333; border-bottom: 0; }
.q-redo { margin-left: 12px; }
.q-sep2 { margin: 0 0 0 6px; }
.q-more { margin-left: 5px; width: 6px; height: 7px; border-top: 1px solid #333; background: linear-gradient(#333,#333) center 3px/6px 3px no-repeat; }
.red-bar { width: 1693px; height: 22px; flex: none; background: linear-gradient(#ff1e1e, #dc0000); display: flex; justify-content: center; align-items: center; font-size: 11.400px; color: #3a0606; white-space: nowrap; }
.red-bar span { margin-left: -12px; }
.v-winbtns { margin-left: 2px; width: 103px; height: 18px; display: flex; border: 1px solid #777; border-top: 0; border-radius: 0 0 4px 4px; background: linear-gradient(#aab0b6, #80878e); }
.wb { width: 28px; display: flex; align-items: center; justify-content: center; border-right: 1px solid #555; }
.wb-close { flex: 1; border: 0; font: bold 14px "Liberation Sans", sans-serif; color: #fff; background: linear-gradient(#e0a09a, #c0453c); border-radius: 0 0 4px 0; }

.v-tabs { height: 24px; display: flex; align-items: flex-end; background: linear-gradient(#e6e7e9, #d0d2d5 60%, #f4f4f4); border-bottom: 1px solid #b8babd; font-size: 11.200px; color: #444; }
.file-tab { width: 55px; height: 23px; display: flex; align-items: center; justify-content: center; background: linear-gradient(#4b74d4, #2448a8); color: #fff; border-radius: 3px 3px 0 0; }
.home-tab { margin-left: 5px; margin-bottom: -1px; width: 55px; height: 24px; display: flex; align-items: center; justify-content: center; background: #fff; border: 1px solid #b8babd; border-bottom: 0; border-radius: 3px 3px 0 0; }
.vt { height: 23px; display: flex; align-items: center; white-space: nowrap; }
.vt1 { margin-left: 16px; } .vt2, .vt3, .vt4, .vt5, .vt6, .vt7 { margin-left: 28px; }
.tab-ctl { margin-left: auto; height: 23px; display: flex; align-items: center; gap: 9px; padding-right: 3px; }
.tab-x { font: bold 13px "Liberation Sans", sans-serif; color: #444; }

.ribbon { height: 90px; display: flex; background: linear-gradient(#fff 60%, #f1f1f2); border-bottom: 4px solid #a8aaae; font-size: 11.200px; color: #333; flex: none; }
.rg { height: 86px; flex: none; display: flex; flex-direction: column; border-right: 1px solid #d4d6d9; position: relative; }
.g-clip { width: 150px; } .g-font { width: 213px; } .g-para { width: 156px; } .g-tools { width: 129px; } .g-shape { width: 87px; } .g-arr { width: 231px; } .g-edit { width: 75px; }
.rg-body { height: 70px; display: flex; padding-top: 3px; }
.rg-body.col { flex-direction: column; }
.rg-label { height: 16px; display: flex; align-items: center; justify-content: center; color: #6f747b; font-size: 11.800px; position: relative; }
.launch { position: absolute; right: 4px; top: 4px; width: 7px; height: 7px; border: 1px solid #999; border-width: 1px 1px 0 0; transform: rotate(90deg); }
.rows { display: flex; flex-direction: column; }
.row { height: 22px; display: flex; align-items: center; white-space: nowrap; }
.dn { border: 3px solid transparent; border-top: 4px solid #666; border-bottom: 0; width: 0; height: 0; flex: none; }
.dis { color: #a8abae; }
.dis .dn { border-top-color: #bbb; }

.paste { width: 48px; display: flex; flex-direction: column; align-items: center; padding-top: 3px; }
.big-label { font-size: 11.200px; line-height: 14px; text-align: center; white-space: nowrap; margin-top: 3px; }
.paste .dn { margin-top: 6px; }
.g-clip .rows { margin-left: 6px; }
.g-clip .row svg { width: 14px; margin-right: 6px; }

.f-row1 { display: flex; align-items: center; margin: 8px 0 0 6px; height: 21px; }
.combo { height: 21px; display: flex; align-items: center; justify-content: space-between; border: 1px solid #d8dadd; background: #fff; padding: 0 5px 0 3px; font-size: 11.800px; color: #222; flex: none; }
.c-font { width: 107px; } .c-size { width: 52px; border-left: 0; }
.grow-a, .shrink-a { font: 17px "Liberation Serif", serif; color: #333; position: relative; margin-left: 6px; width: 16px; display: block; text-align: center; }
.shrink-a { font-size: 13px; margin-left: 6px; }
.up { position: absolute; right: -1px; top: 2px; border: 3px solid transparent; border-bottom: 3px solid #333; border-top: 0; }
.up-blue { border-bottom-color: #2a6fd0; }
.f-row2 { display: flex; align-items: center; height: 22px; margin: 8px 0 0 6px; }
.fb { width: 24px; flex: none; text-align: center; font: bold 14px "Liberation Serif", serif; color: #222; display: flex; justify-content: center; align-items: center; gap: 1px; }
.fi { font-style: italic; font-weight: 400; }
.fu { text-decoration: underline; }
.fs { font-weight: 400; font-size: 12px; text-decoration: line-through; }
.fa { font-weight: 400; font-size: 14px; }
.vsep { width: 1px; height: 22px; background: #d4d6d9; flex: none; }
.f-row2 .vsep { margin: 0 9px; }
.color-a { width: 15px; height: 22px; font: bold 17px/17px "Liberation Serif", serif; color: #2a5cab; text-align: center; display: flex; flex-direction: column; align-items: center; flex: none; }
.redbar { width: 15px; height: 4px; background: #f00; }
.f-row2 > .dn { margin-left: 5px; }

.p-row { display: flex; align-items: center; margin: 8px 0 0 6px; height: 21px; }
.pb { width: 23px; height: 21px; flex: none; display: flex; align-items: center; justify-content: center; border-radius: 3px; }
.pb.on { background: linear-gradient(#ffe68c, #fdca55); border: 1px solid #d9a93f; }
.bul { margin-left: 8px; }
.p-row1 .vsep { margin: 0 6px; }
.p-row2 .vsep { margin: 0 6px 0 8px; }
.ab-dis { font: 17px "Liberation Serif", serif; color: #b0b3b7; }
.ab-dis sup { font-size: 8px; }
.ind { width: 22px; }

.g-tools .rows { margin-left: 6px; width: 88px; }
.pointer { background: linear-gradient(#ffe88f, #fdca55); border: 1px solid #dba63c; border-radius: 3px; padding-left: 5px; gap: 8px; }
.tool { padding-left: 4px; gap: 3px; }
.big-a { width: 15px; font: 19px "Liberation Serif", serif; color: #222; text-align: center; margin-left: 1px; }
.tool-side { display: flex; flex-direction: column; margin-left: 3px; }
.side { height: 22px; display: flex; align-items: center; gap: 4px; }
.side:nth-child(n+2) { padding-left: 1px; }
.swatch { width: 15px; height: 12px; background: linear-gradient(#fff, #cfe0f3); border: 1px solid #3c5f95; }
.x-blue { color: #1f3fd0; font-size: 14px; padding-left: 1px; }
.g-shape .rows { margin-left: 8px; }
.g-shape .row svg { margin-right: 3px; }
.g-shape .row .dn, .g-arr .row .dn, .g-edit .row .dn { margin-left: 5px; }
.bigbtn { display: flex; flex-direction: column; align-items: center; padding-top: 3px; flex: none; }
.b-auto { width: 70px; } .b-pos { width: 40px; }
.bigbtn .big-label { line-height: 13px; margin-top: 3px; }
.bigbtn .dn { margin-top: 6px; }
.dis-rows { margin-left: 6px; }
.dis-rows .row svg { margin-right: 4px; }
.g-edit .rows { margin-left: 8px; }
.g-edit .row svg { margin-right: 4px; }

.v-main { height: 921px; display: flex; flex: none; }
.shapes { width: 250px; flex: none; background: #fff; border-left: 1px solid #c8cacd; border-bottom: 2px solid #9a9ea3; font-size: 11.200px; color: #444; }
.sh-head { height: 25px; background: #cdd0d6; padding-left: 5px; display: flex; align-items: center; border-top: 1px solid #eee; position: relative; }
.tri-l { position: absolute; right: 9px; top: 7px; border: 5px solid transparent; border-right: 5px solid #555; border-left: 0; }
.tri-r { position: absolute; right: 9px; top: 6px; border: 5px solid transparent; border-left: 5px solid #555; border-right: 0; }
.sh-row { height: 22px; padding-left: 7px; background: linear-gradient(#eef0f2, #e3e5e8); border-bottom: 1px solid #b5b8bc; display: flex; align-items: center; position: relative; white-space: nowrap; }
.sh-row.sel { background: linear-gradient(#ffe38a, #fdd063); border: 1px solid #d29a38; border-radius: 3px; padding-left: 6px; }
.sh-bar { height: 5px; background: #dde0e4; border-bottom: 1px solid #b5b8bc; }
.sh-title { font-weight: 700; padding: 3px 0 0 7px; height: 22px; color: #3a3a3a; }
.sh-grid { display: grid; grid-template-columns: 112px 109px; grid-auto-rows: 37px; padding-left: 6px; }
.sh-item { display: flex; align-items: center; white-space: nowrap; }
.m-process { width: 31px; height: 15px; border: 1px solid #111; border-radius: 5px; margin-right: 2px; }
.hot { background: linear-gradient(#ffe68c, #fdd063); border: 1px solid #e0b050; border-radius: 2px; height: 33px; }
.m-iface { width: 32px; height: 32px; background: #fff; border: 1px solid #111; margin-right: 2px; flex: none; }
.m-store { width: 31px; height: 15px; border: 1px solid #111; border-right: 0; margin-right: 2px; }
.flow svg { margin: 0 4px 0 3px; }
.sh-rule { height: 1px; background: #e3e3e3; margin: 9px 3px 0; }

.splitter { width: 6px; flex: none; background: #cdd0d6; border-left: 1px solid #9ea1a5; }
.work { flex: 1; min-width: 0; display: grid; grid-template-columns: 15px 1632px 17px; grid-template-rows: 16px 887px 18px; background: #dde0e6; overflow: hidden; }
.r-corner { background: #f2f2f2; border-bottom: 1px solid #000; border-right: 1px solid #000; }
.r-corner i { width: 9px; height: 9px; margin: 4px 3px; border-top: 1px dotted #3a5fc0; border-left: 1px dotted #3a5fc0; }
.h-ruler { display: flex; overflow: hidden; padding-left: 8px; height: 16px; border-bottom: 1px solid #000; background-color: #f4f4f4; background-image: linear-gradient(90deg, #555 1px, transparent 1px), linear-gradient(90deg, #555 1px, transparent 1px), linear-gradient(90deg, #555 1px, transparent 1px), linear-gradient(90deg, #555 1px, transparent 1px); background-size: 10px 3px, 20px 6px, 40px 10px, 80px 15px; background-position: 8px 12px, 8px 9px, 8px 5px, 8px 0; background-repeat: repeat-x; }
.h-ruler span { width: 80px; flex: none; font: 10px/13px "Open Sans", sans-serif; color: #000; padding-left: 1px; }
.v-scroll { grid-row: 1 / span 2; grid-column: 3; background: #dde0e6; display: flex; flex-direction: column; align-items: center; padding: 6px 0 4px; }
.vs-up { border: 5px solid transparent; border-bottom: 5px solid #555; border-top: 0; }
.vs-thumb { margin-top: 358px; width: 16px; height: 162px; background: linear-gradient(90deg, #eef0f3, #dfe2e6); border: 1px solid #8f9499; border-radius: 2px; display: flex; align-items: center; justify-content: center; }
.vs-thumb::after { content: ""; width: 8px; height: 7px; background: repeating-linear-gradient(#666 0 1px, transparent 1px 2px); }
.vs-down { margin-top: auto; border: 5px solid transparent; border-top: 5px solid #555; border-bottom: 0; }
.v-ruler { display: flex; flex-direction: column; overflow: hidden; height: 887px; border-right: 1px solid #000; background-color: #f4f4f4; background-image: linear-gradient(#555 1px, transparent 1px), linear-gradient(#555 1px, transparent 1px), linear-gradient(#555 1px, transparent 1px), linear-gradient(#555 1px, transparent 1px); background-size: 3px 10px, 6px 20px, 10px 40px, 14px 80px; background-position: 11px 6px, 8px 16px, 4px 36px, 0 76px; background-repeat: repeat-y; }
.v-ruler span { height: 80px; flex: none; writing-mode: vertical-rl; transform: rotate(180deg); font: 10px/13px "Open Sans", sans-serif; color: #000; }
.v-ruler span:first-child { margin-top: -4px; }
.canvas { background: #cdd0d6; overflow: hidden; }
.sheet { width: 1088px; height: 887px; background: #fff; box-shadow: 3px 0 4px rgba(0,0,0,.25); }
.grid { width: 1068px; height: 887px; position: relative; background-image: linear-gradient(90deg, #d2d2d2 1px, transparent 1px), linear-gradient(#d2d2d2 1px, transparent 1px); background-size: 10px 10px; background-position: 8px 6px; }
.dash-h { position: absolute; left: 0; width: 1068px; border-top: 1px dashed #111; }
.d1 { top: 126px; } .d2 { top: 766px; }
.dash-v { position: absolute; left: 228px; top: 0; height: 887px; border-left: 1px dashed #111; }
.ln { position: absolute; background: #333; }
.l-h { left: 0; top: 166px; width: 228px; height: 1px; }
.l-v1 { left: 118px; top: 166px; width: 1px; height: 40px; }
.l-v2 { left: 228px; top: 166px; width: 1px; height: 40px; }
.node { position: absolute; width: 81px; height: 81px; background: #fff; border: 1px solid #3a3a3a; display: flex; align-items: center; justify-content: center; font-size: 9px; color: #222; }
.n-contact { left: -42px; top: 206px; }
.n-blog { left: 78px; top: 206px; }
.n-prices { left: 188px; top: 206px; }
.n-purple { left: 528px; top: 466px; background: #7030a0; color: #2a0f4a; }
.n-green { left: 772px; top: 468px; background: #92d050; color: #1c2a10; }
.tabs-row { grid-column: 1 / span 2; height: 18px; display: flex; align-items: center; padding-left: 3px; background: #dde0e6; border-bottom: 1px solid #9ea1a5; border-top: 1px solid #c8cbd0; }
.nav-ic { width: 16px; flex: none; display: flex; justify-content: center; }
.page-tab { width: 53px; height: 17px; background: #fff; font-size: 12px; font-weight: 600; color: #333; display: flex; align-items: center; justify-content: center; border-radius: 0 0 3px 3px; }
.new-tab { margin-left: 3px; width: 44px; height: 16px; display: flex; align-items: center; justify-content: center; border: 1px solid #b0b3b8; border-top: 0; transform: skewX(-30deg); }
.new-tab svg { transform: skewX(30deg); }
.h-scroll { margin-left: auto; width: 458px; height: 16px; display: flex; align-items: center; }
.hs-thumb { margin-left: 6px; width: 263px; height: 16px; background: linear-gradient(#eef0f3, #dfe2e6); border: 1px solid #8f9499; border-radius: 2px; display: flex; align-items: center; justify-content: center; }
.hs-thumb b { width: 7px; height: 7px; background: repeating-linear-gradient(90deg, #666 0 1px, transparent 1px 2px); }
.hs-right { margin-left: auto; margin-right: 3px; border: 5px solid transparent; border-left: 5px solid #555; border-right: 0; }
.w-corner { background: #dde0e6; border-bottom: 1px solid #9ea1a5; border-left: 1px solid #c8cbd0; }

.v-status { height: 22px; display: flex; align-items: center; background: linear-gradient(#e4e6e8, #c9cbcf); font-size: 11.200px; color: #444; white-space: nowrap; flex: none; }
.st { height: 100%; display: flex; align-items: center; border-right: 1px solid #a9acb0; flex: none; }
.st-page { width: 75px; padding-left: 9px; }
.st-lang { width: 86px; padding-left: 10px; }
.st-ic { width: 36px; padding-left: 9px; }
.st-fill { flex: 1; }
.st-sep { width: 1px; height: 100%; background: #a9acb0; }
.view-on { margin-left: 5px; width: 18px; height: 19px; background: linear-gradient(#ffe88f, #fdca55); border: 1px solid #dba63c; border-radius: 2px; display: flex; align-items: center; justify-content: center; }
.view-pres { margin-left: 5px; width: 12px; }
.zoom-pct { margin-left: 6px; width: 28px; margin-right: 10px; color: #6b5a3a; }
.slider { width: 100px; height: 1px; background: #9a9ea3; position: relative; }
.knob { position: absolute; left: 37px; top: -5px; width: 8px; height: 11px; background: #f4f4f4; border: 1px solid #777; border-radius: 1px 1px 4px 4px; }
.st-r { margin-left: 8px; }
.sr2 { margin-left: 12px; }
.sr3 { margin-left: 12px; margin-right: 11px; }
```
